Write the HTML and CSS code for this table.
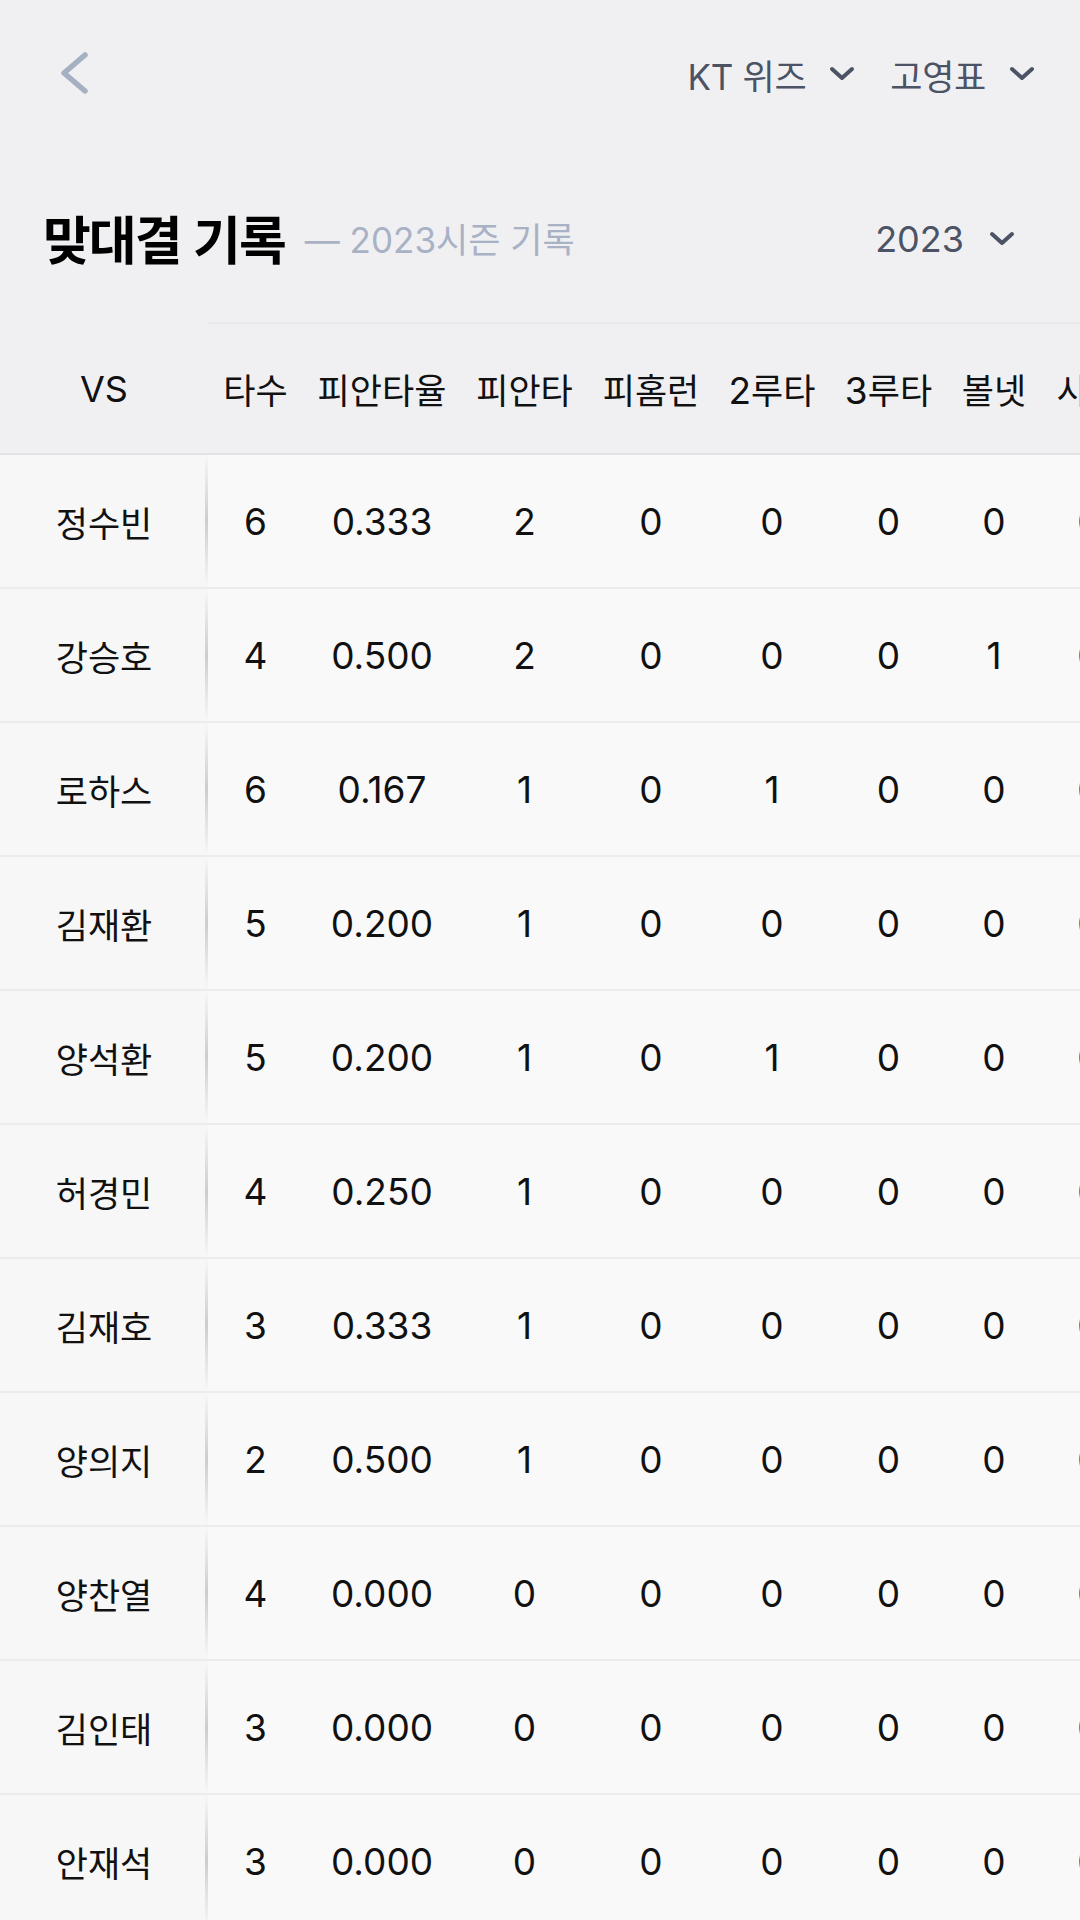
FILE: index.html
```html
<!DOCTYPE html>
<html lang="ko">
<head>
<meta charset="utf-8">
<title>맞대결 기록</title>
<link rel="stylesheet" href="styles.css">
</head>
<body>
<div class="top">
  <div class="nav">
    <svg class="back" viewBox="0 0 32 44"><path d="M27 4 L6 22 L27 40" fill="none" stroke="#a6b0c3" stroke-width="5.5" stroke-linecap="round" stroke-linejoin="round"/></svg>
    <div class="selects">
      <div class="select"><span>KT 위즈</span><svg class="chev" viewBox="0 0 28 18"><path d="M4 4 L14 13 L24 4" fill="none" stroke="#4b5365" stroke-width="4" stroke-linecap="round" stroke-linejoin="round"/></svg></div>
      <div class="select"><span>고영표</span><svg class="chev" viewBox="0 0 28 18"><path d="M4 4 L14 13 L24 4" fill="none" stroke="#4b5365" stroke-width="4" stroke-linecap="round" stroke-linejoin="round"/></svg></div>
    </div>
  </div>
  <div class="titlebar">
    <div class="title">
      <h1>맞대결 기록</h1>
      <span class="sub">— 2023시즌 기록</span>
    </div>
    <div class="year"><span>2023</span><svg class="chev" viewBox="0 0 28 18"><path d="M4 4 L14 13 L24 4" fill="none" stroke="#4b5365" stroke-width="4" stroke-linecap="round" stroke-linejoin="round"/></svg></div>
  </div>
</div>
<div class="tablewrap">
  <table class="stats">
    <thead>
      <tr>
        <th class="vs">VS</th>
        <th>타수</th>
        <th>피안타율</th>
        <th>피안타</th>
        <th>피홈런</th>
        <th><span class="dg">2</span>루타</th>
        <th><span class="dg">3</span>루타</th>
        <th>볼넷</th>
        <th>사구</th>
        <th>삼진</th>
      </tr>
    </thead>
    <tbody>
      <tr><td class="name">정수빈</td><td>6</td><td>0.333</td><td>2</td><td>0</td><td>0</td><td>0</td><td>0</td><td>0</td><td>1</td></tr>
      <tr><td class="name">강승호</td><td>4</td><td>0.500</td><td>2</td><td>0</td><td>0</td><td>0</td><td>1</td><td>0</td><td>0</td></tr>
      <tr><td class="name">로하스</td><td>6</td><td>0.167</td><td>1</td><td>0</td><td>1</td><td>0</td><td>0</td><td>0</td><td>2</td></tr>
      <tr><td class="name">김재환</td><td>5</td><td>0.200</td><td>1</td><td>0</td><td>0</td><td>0</td><td>0</td><td>0</td><td>1</td></tr>
      <tr><td class="name">양석환</td><td>5</td><td>0.200</td><td>1</td><td>0</td><td>1</td><td>0</td><td>0</td><td>0</td><td>0</td></tr>
      <tr><td class="name">허경민</td><td>4</td><td>0.250</td><td>1</td><td>0</td><td>0</td><td>0</td><td>0</td><td>0</td><td>0</td></tr>
      <tr><td class="name">김재호</td><td>3</td><td>0.333</td><td>1</td><td>0</td><td>0</td><td>0</td><td>0</td><td>0</td><td>1</td></tr>
      <tr><td class="name">양의지</td><td>2</td><td>0.500</td><td>1</td><td>0</td><td>0</td><td>0</td><td>0</td><td>0</td><td>0</td></tr>
      <tr><td class="name">양찬열</td><td>4</td><td>0.000</td><td>0</td><td>0</td><td>0</td><td>0</td><td>0</td><td>0</td><td>2</td></tr>
      <tr><td class="name">김인태</td><td>3</td><td>0.000</td><td>0</td><td>0</td><td>0</td><td>0</td><td>0</td><td>0</td><td>1</td></tr>
      <tr><td class="name">안재석</td><td>3</td><td>0.000</td><td>0</td><td>0</td><td>0</td><td>0</td><td>0</td><td>0</td><td>1</td></tr>
    </tbody>
  </table>
</div>
</body>
</html>
```

FILE: styles.css
```css
* { box-sizing: border-box; }
html, body { margin: 0; padding: 0; }
body {
  width: 1080px;
  height: 1920px;
  overflow: hidden;
  background: #f9f9f9;
  font-family: "Inter", "Noto Sans CJK KR", sans-serif;
  color: #111;
}
.top { background: #f0f0f3; }
.nav {
  height: 148px;
  display: flex;
  align-items: center;
  justify-content: space-between;
  padding: 0 44px 0 58px;
}
.back { width: 32px; height: 44px; display: block; margin-top: -2px; }
.selects { display: flex; align-items: center; gap: 34px; }
.select {
  display: flex;
  align-items: center;
  gap: 22px;
  font-size: 35px;
  color: #4b5365;
  font-family: "Inter", "Noto Sans CJK KR", sans-serif;
}
.select span { letter-spacing: -0.3px; }
.chev { width: 28px; height: 18px; display: block; }
.titlebar {
  height: 174px;
  display: flex;
  align-items: center;
  justify-content: space-between;
  padding: 8px 64px 0 43px;
}
.title { display: flex; align-items: center; gap: 20px; margin-top: -4px; }
.title h1 {
  margin: 0;
  font-family: "Noto Sans CJK KR", sans-serif;
  font-weight: 700;
  font-size: 52px;
  letter-spacing: -2px;
  color: #000;
}
.sub {
  font-size: 35px;
  color: #a9b2c5;
  font-family: "Inter", "Noto Sans CJK KR", sans-serif;
}
.year {
  display: flex;
  align-items: center;
  gap: 24px;
  font-size: 36px;
  color: #4b5365;
}
.tablewrap { width: 1080px; overflow: hidden; }
.stats {
  border-collapse: collapse;
  table-layout: fixed;
  width: 1230px;
  white-space: nowrap;
}
.stats th {
  height: 131px;
  padding: 0;
  font-weight: 400;
  font-size: 35px;
  font-family: "Noto Sans CJK KR", sans-serif;
  color: #111;
  background: #f0f0f3;
  border-top: 2px solid #e8e8eb;
  border-bottom: 2px solid #e3e3e5;
  text-align: center;
}
.stats th:nth-child(2) { width: 95px; }
.stats th:nth-child(3) { width: 158px; }
.stats th:nth-child(4) { width: 127px; }
.stats th:nth-child(5) { width: 126px; }
.stats th:nth-child(6) { width: 116px; }
.stats th:nth-child(7) { width: 117px; }
.stats th:nth-child(8) { width: 94px; }
.stats th:nth-child(9) { width: 96px; }
.stats th:nth-child(10) { width: 93px; }
.stats th .dg { font-family: "Inter", sans-serif; font-size: 37px; }
.stats th.vs {
  width: 208px;
  border-top: 2px solid #f0f0f3;
  font-family: "Inter", sans-serif;
  font-size: 36px;
}
.stats td {
  height: 134px;
  padding: 0;
  text-align: center;
  font-size: 37px;
  font-family: "Inter", sans-serif;
  color: #111;
  border-bottom: 2px solid #ececec;
}
.stats td.name {
  font-family: "Noto Sans CJK KR", sans-serif;
  font-size: 35px;
  background: linear-gradient(to bottom, rgba(210,210,210,0) 0%, #cdcdcd 50%, rgba(210,210,210,0) 100%) no-repeat right center / 3px 100%, #f7f7f7;
}
```
